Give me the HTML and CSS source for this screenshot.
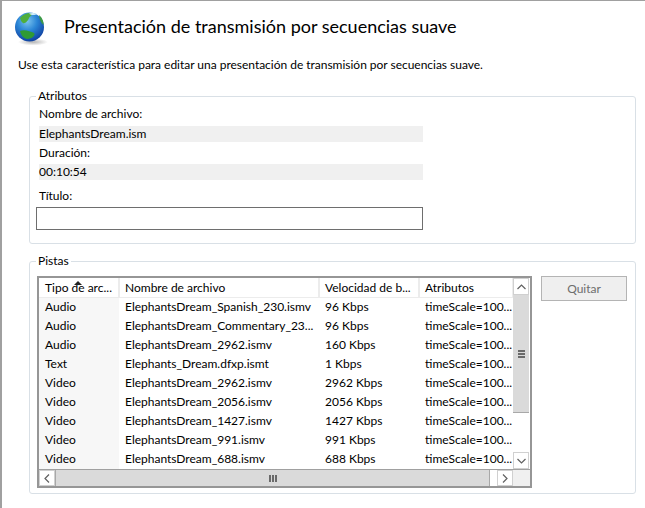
FILE: index.html
```html
<!DOCTYPE html>
<html lang="es">
<head>
  <meta charset="UTF-8" />
  <title>Presentación de transmisión por secuencias suave</title>
  <link rel="stylesheet" href="styles.css">
</head>
<body>
  <div class="page">
    <header class="head">
      <svg class="globe" width="34" height="36" viewBox="0 0 34 36">
        <defs>
          <radialGradient id="sea" cx="0.42" cy="0.3" r="0.75">
            <stop offset="0" stop-color="#7cc4ee"/>
            <stop offset="0.45" stop-color="#2b86d6"/>
            <stop offset="1" stop-color="#0c3a9c"/>
          </radialGradient>
          <radialGradient id="shade" cx="0.5" cy="0.5" r="0.5">
            <stop offset="0" stop-color="#777" stop-opacity="0.55"/>
            <stop offset="1" stop-color="#777" stop-opacity="0"/>
          </radialGradient>
        </defs>
        <ellipse cx="19" cy="31" rx="15" ry="3.5" fill="url(#shade)"/>
        <circle cx="15.5" cy="16" r="14.5" fill="url(#sea)"/>
        <path d="M6 7 C9 3 14 1.500 18 2 C19 4 16 5 15 7 C14 10 11 13 9 12 C7 11 7 9 6 7Z" fill="#4fae3c"/>
        <path d="M6 20 C10 18 16 20 20 22 C22 24 18 28 13 28 C9 27 7 24 6 20Z" fill="#2f9a35"/>
        <path d="M25 4 C28 6 30 11 29.500 14 C27 12 25 8 25 4Z" fill="#3c9a48"/>
        <path d="M15 2.500 C18 1.500 21 2 23 3 C21 4.500 17 4.500 15 2.500Z" fill="#cfeaf8"/>
      </svg>
      <h1 class="title">Presentación de transmisión por secuencias suave</h1>
    </header>
    <p class="intro">Use esta característica para editar una presentación de transmisión por secuencias suave.</p>

    <fieldset class="group group-attrs">
      <legend>Atributos</legend>
      <div class="label">Nombre de archivo:</div>
      <div class="readonly">ElephantsDream.ism</div>
      <div class="label label-duration">Duración:</div>
      <div class="readonly">00:10:54</div>
      <div class="label label-title">Título:</div>
      <input class="title-input" type="text" />
    </fieldset>

    <fieldset class="group group-tracks">
      <legend>Pistas</legend>
      <div class="tracks-row">
        <div class="listview">
          <div class="list-main">
            <div class="list-cols">
              <div class="list-head">
                <div class="th col-type">Tipo de arc...<span class="sort-arrow"></span></div>
                <div class="th col-name">Nombre de archivo</div>
                <div class="th col-rate">Velocidad de b...</div>
                <div class="th col-attr">Atributos</div>
              </div>
              <div class="list-row"><div class="td col-type">Audio</div><div class="td col-name">ElephantsDream_Spanish_230.ismv</div><div class="td col-rate">96 Kbps</div><div class="td col-attr">timeScale=100...</div></div>
              <div class="list-row"><div class="td col-type">Audio</div><div class="td col-name">ElephantsDream_Commentary_23...</div><div class="td col-rate">96 Kbps</div><div class="td col-attr">timeScale=100...</div></div>
              <div class="list-row"><div class="td col-type">Audio</div><div class="td col-name">ElephantsDream_2962.ismv</div><div class="td col-rate">160 Kbps</div><div class="td col-attr">timeScale=100...</div></div>
              <div class="list-row"><div class="td col-type">Text</div><div class="td col-name">Elephants_Dream.dfxp.ismt</div><div class="td col-rate">1 Kbps</div><div class="td col-attr">timeScale=100...</div></div>
              <div class="list-row"><div class="td col-type">Video</div><div class="td col-name">ElephantsDream_2962.ismv</div><div class="td col-rate">2962 Kbps</div><div class="td col-attr">timeScale=100...</div></div>
              <div class="list-row"><div class="td col-type">Video</div><div class="td col-name">ElephantsDream_2056.ismv</div><div class="td col-rate">2056 Kbps</div><div class="td col-attr">timeScale=100...</div></div>
              <div class="list-row"><div class="td col-type">Video</div><div class="td col-name">ElephantsDream_1427.ismv</div><div class="td col-rate">1427 Kbps</div><div class="td col-attr">timeScale=100...</div></div>
              <div class="list-row"><div class="td col-type">Video</div><div class="td col-name">ElephantsDream_991.ismv</div><div class="td col-rate">991 Kbps</div><div class="td col-attr">timeScale=100...</div></div>
              <div class="list-row"><div class="td col-type">Video</div><div class="td col-name">ElephantsDream_688.ismv</div><div class="td col-rate">688 Kbps</div><div class="td col-attr">timeScale=100...</div></div>
            </div>
            <div class="vscroll">
              <div class="sb-btn">
                <svg width="9" height="6" viewBox="0 0 9 6"><path d="M0.500 5 L4.500 1 L8.500 5" fill="none" stroke="#606060" stroke-width="1.200"/></svg>
              </div>
              <div class="v-thumb"><span></span><span></span><span></span></div>
              <div class="sb-fill"></div>
              <div class="sb-btn">
                <svg width="9" height="6" viewBox="0 0 9 6"><path d="M0.500 1 L4.500 5 L8.500 1" fill="none" stroke="#606060" stroke-width="1.200"/></svg>
              </div>
            </div>
          </div>
          <div class="hscroll">
            <div class="sb-btn">
              <svg width="6" height="9" viewBox="0 0 6 9"><path d="M5 0.500 L1 4.500 L5 8.500" fill="none" stroke="#606060" stroke-width="1.200"/></svg>
            </div>
            <div class="h-thumb"><span></span><span></span><span></span></div>
            <div class="sb-gap"></div>
            <div class="sb-btn">
              <svg width="6" height="9" viewBox="0 0 6 9"><path d="M1 0.500 L5 4.500 L1 8.500" fill="none" stroke="#606060" stroke-width="1.200"/></svg>
            </div>
            <div class="sb-corner"></div>
          </div>
        </div>
        <button class="btn" type="button">Quitar</button>
      </div>
    </fieldset>
  </div>
</body>
</html>
```

FILE: styles.css
```css
* {
  box-sizing: border-box;
}
html,
body {
  height: 100%;
}
body {
  margin: 0;
  font-family: Lato, "Open Sans", sans-serif;
  font-size: 12px;
  color: #000;
  background-color: #fff;
  overflow: hidden;
}
.page {
  height: 508px;
  border-top: 1px solid #a0a0a0;
  border-left: 2px solid #a0a0a0;
  padding: 0 9px 0 27px;
}

/* Header */
.head {
  display: flex;
  align-items: center;
  height: 56px;
  margin-left: -15px;
}
.globe {
  flex: none;
}
.title {
  margin: 0 0 6px 16px;
  font-size: 18px;
  font-weight: 400;
  color: #000;
  white-space: nowrap;
}
.intro {
  margin: -1px 0 0 -11px;
  height: 18px;
  line-height: 18px;
  letter-spacing: -0.02px;
}

/* Group boxes */
.group {
  margin: 0;
  padding: 0;
  border: 1px solid #d9e0e6;
  border-radius: 3px;
  min-width: 0;
}
.group legend {
  margin-left: 0;
  padding: 0 2px;
  line-height: 14px;
}
.group-attrs {
  height: 155px;
  margin-top: 15px;
  padding: 1px 9px 0 6px;
}
.group-tracks {
  height: 240px;
  margin-top: 10px;
  padding: 8px 7px 0 6px;
}
.label {
  height: 19px;
  line-height: 19px;
  padding-left: 3px;
}
.label-duration {
  line-height: 21px;
}
.readonly {
  width: 384px;
  height: 16px;
  line-height: 16px;
  margin: 3px 0 0 3px;
  background-color: #f0f0f0;
}
.readonly + .label-title {
  margin-top: 6px;
}
.title-input {
  display: block;
  width: 387px;
  height: 23px;
  margin: 2px 0 0 0;
  border: 1px solid #6e6e6e;
  background-color: #fff;
}

/* Track list */
.tracks-row {
  display: flex;
  align-items: flex-start;
  gap: 9px;
  margin-left: 1px;
}
.listview {
  flex: none;
  width: 495px;
  height: 212px;
  border: 2px solid #969696;
  background-color: #fff;
}
.list-main {
  display: flex;
  height: 191px;
}
.list-cols {
  width: 474px;
  overflow: hidden;
}
.list-head,
.list-row {
  display: flex;
}
.list-head {
  height: 20px;
}
.list-row {
  height: 19px;
}
.th,
.td {
  padding-left: 6px;
  white-space: nowrap;
  overflow: hidden;
}
.th {
  position: relative;
  height: 20px;
  line-height: 19px;
  border-right: 1px solid #ececec;
  border-bottom: 1px solid #ececec;
}
.th + .th {
  padding-left: 5px;
  border-left: 1px solid #ececec;
}
.td {
  line-height: 18px;
}
.td.col-type {
  background-color: #f7f7f7;
}
.col-type {
  width: 80px;
}
.col-name {
  width: 200px;
}
.col-rate {
  width: 100px;
}
.col-attr {
  width: 94px;
}
.sort-arrow {
  position: absolute;
  left: 35px;
  top: 3px;
  width: 0;
  height: 0;
  border-left: 4px solid transparent;
  border-right: 4px solid transparent;
  border-bottom: 4px solid #222;
}

/* Scrollbars */
.vscroll {
  flex: none;
  width: 16px;
  display: flex;
  flex-direction: column;
  height: 191px;
}
.sb-btn {
  flex: none;
  width: 16px;
  height: 17px;
  display: flex;
  align-items: center;
  justify-content: center;
  border: 1px solid #d0d0d0;
  background-color: #fff;
}
.hscroll .sb-btn {
  height: 16px;
}
.v-thumb {
  flex: none;
  height: 118px;
  display: flex;
  flex-direction: column;
  align-items: center;
  justify-content: center;
  gap: 1px;
  background-color: #dadada;
  border-bottom: 1px solid #a8a8a8;
}
.v-thumb span {
  width: 7px;
  height: 2px;
  background-color: #6a6a6a;
}
.sb-fill {
  flex: 1;
}
.hscroll {
  display: flex;
  height: 17px;
  border-top: 1px solid #a0a0a0;
  background-color: #f0f0f0;
}
.h-thumb {
  flex: none;
  width: 435px;
  display: flex;
  align-items: center;
  justify-content: center;
  gap: 1px;
  background-color: #dadada;
  border-left: 1px solid #a8a8a8;
  border-right: 1px solid #a8a8a8;
}
.h-thumb span {
  width: 2px;
  height: 7px;
  background-color: #6a6a6a;
}
.sb-gap {
  flex: 1;
  background-color: #fff;
}
.sb-corner {
  flex: none;
  width: 17px;
}

/* Button */
.btn {
  flex: none;
  width: 86px;
  height: 25px;
  padding: 0;
  border: 1px solid #b4b4b4;
  background-color: #efefef;
  color: #6d6d6d;
  font-family: inherit;
  font-size: 12px;
}
```
